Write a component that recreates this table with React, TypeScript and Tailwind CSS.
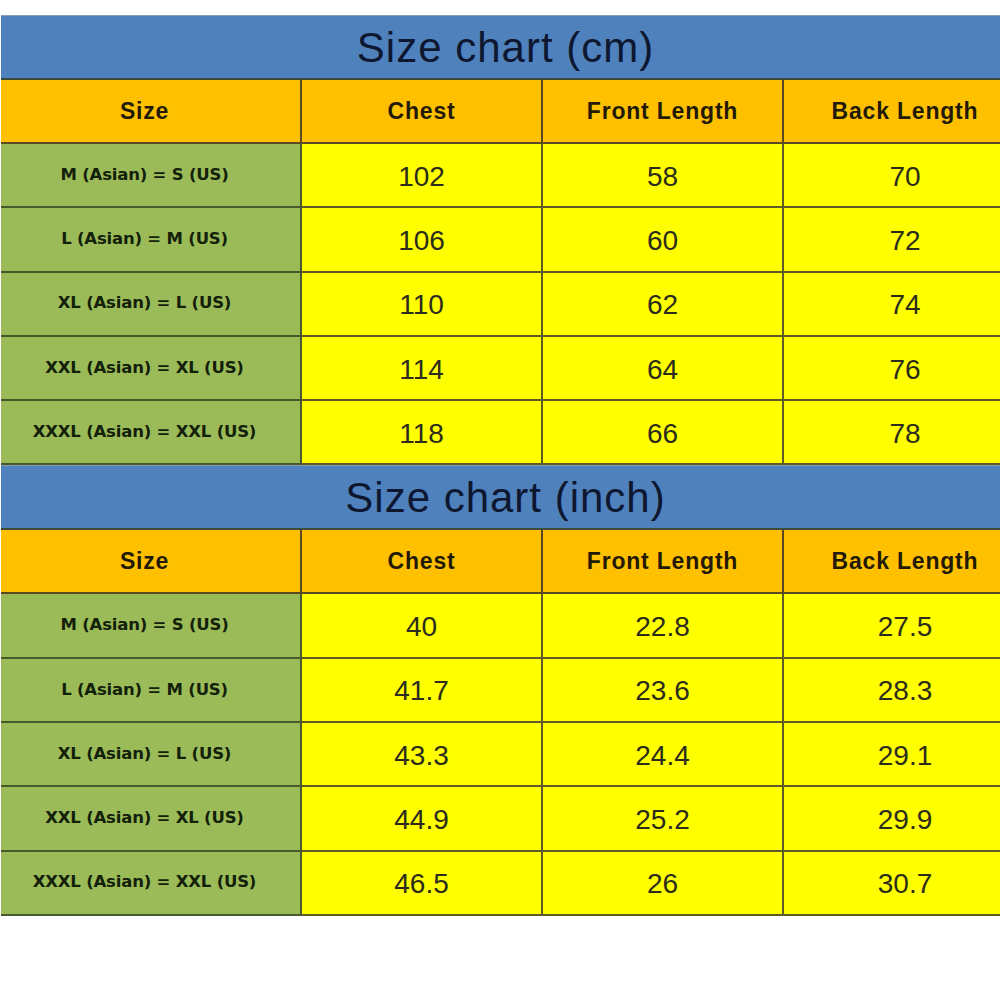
const cmRows = [
  ["M (Asian) = S (US)", "102", "58", "70"],
  ["L (Asian) = M (US)", "106", "60", "72"],
  ["XL (Asian) = L (US)", "110", "62", "74"],
  ["XXL (Asian) = XL (US)", "114", "64", "76"],
  ["XXXL (Asian) = XXL (US)", "118", "66", "78"],
];

const inchRows = [
  ["M (Asian) = S (US)", "40", "22.8", "27.5"],
  ["L (Asian) = M (US)", "41.7", "23.6", "28.3"],
  ["XL (Asian) = L (US)", "43.3", "24.4", "29.1"],
  ["XXL (Asian) = XL (US)", "44.9", "25.2", "29.9"],
  ["XXXL (Asian) = XXL (US)", "46.5", "26", "30.7"],
];

const headers = ["Size", "Chest", "Front Length", "Back Length"];

const cellPad = ["pr-[12px]", "", "", "pl-[26px]"];

function SizeTable({ title, rows }: { title: string; rows: string[][] }) {
  return (
    <section>
      <div className="h-[65px] flex items-center justify-center pl-[10px] bg-[#4f81bd] border-t border-t-[#8a9ab0] border-b-2 border-b-[#3c4a3a]">
        <h2 className="font-[family-name:Liberation_Sans,Arial,sans-serif] text-[42px] tracking-[1px] text-[#0e1730] leading-none pt-[2px]">
          {title}
        </h2>
      </div>
      <div className="grid grid-cols-[301px_241px_241px_1fr]">
        {headers.map((h, i) => (
          <div
            key={h}
            className={`h-[64px] flex items-center justify-center bg-[#ffc000] border-b-2 border-[#5a4a20] ${i < 3 ? "border-r-2" : ""} ${cellPad[i]}`}
          >
            <span className="font-[family-name:Liberation_Sans,Arial,sans-serif] font-bold text-[23px] tracking-[0.8px] text-[#231a05]">
              {h}
            </span>
          </div>
        ))}
        {rows.map((row) =>
          row.map((val, i) => (
            <div
              key={row[0] + i}
              className={`h-[64.3px] flex items-center justify-center border-b-2 ${i < 3 ? "border-r-2" : ""} ${
                i === 0 ? "bg-[#9bbb59] border-[#485a2c]" : "bg-[#ffff00] border-[#5c5c24]"
              } ${cellPad[i]}`}
            >
              {i === 0 ? (
                <span className="font-[family-name:DejaVu_Sans,Verdana,sans-serif] font-bold text-[16.5px] tracking-[-0.2px] text-[#13200a]">
                  {val}
                </span>
              ) : (
                <span className="font-[family-name:Liberation_Sans,Arial,sans-serif] text-[28px] text-[#2c2c1c] pt-[3px]">
                  {val}
                </span>
              )}
            </div>
          ))
        )}
      </div>
    </section>
  );
}

export default function App() {
  return (
    <div className="w-[1000px] h-[1000px] bg-white pt-[15px] pl-px overflow-hidden">
      <SizeTable title="Size chart (cm)" rows={cmRows} />
      <SizeTable title="Size chart (inch)" rows={inchRows} />
    </div>
  );
}
